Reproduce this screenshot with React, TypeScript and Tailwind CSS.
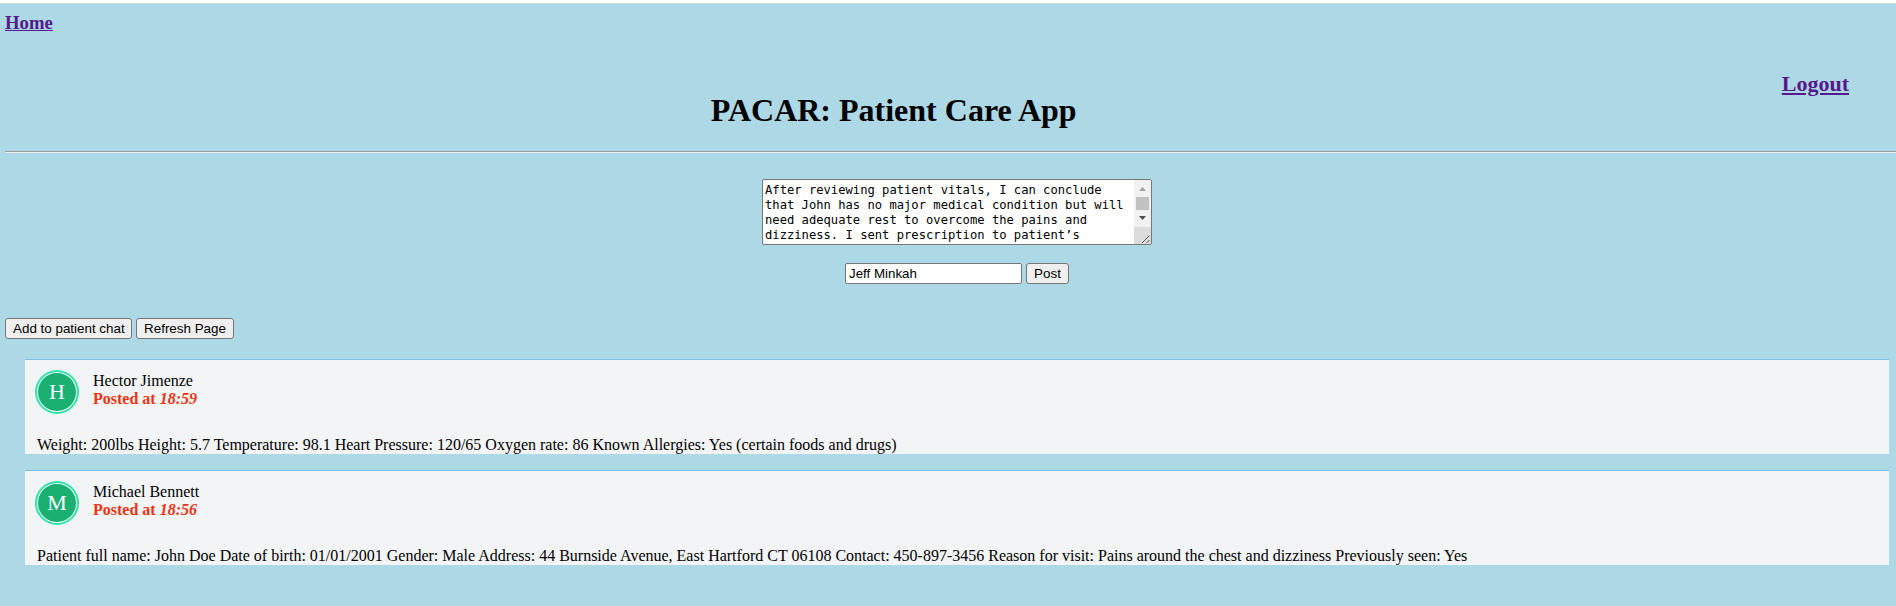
const posts = [
  { initial: 'H', name: 'Hector Jimenze', time: '18:59', body: 'Weight: 200lbs Height: 5.7 Temperature: 98.1 Heart Pressure: 120/65 Oxygen rate: 86 Known Allergies: Yes (certain foods and drugs)' },
  { initial: 'M', name: 'Michael Bennett', time: '18:56', body: 'Patient full name: John Doe Date of birth: 01/01/2001 Gender: Male Address: 44 Burnside Avenue, East Hartford CT 06108 Contact: 450-897-3456 Reason for visit: Pains around the chest and dizziness Previously seen: Yes' },
];

const button = 'h-[21px] rounded-[3px] border border-[#767676] bg-[#efefef] px-[7px] text-[13.4px] leading-[18px] whitespace-nowrap text-black';

function ScrollBar() {
  return (
    <div className="flex w-[17px] flex-col bg-[#f1f1f1]">
      <svg width="17" height="17"><path d="M5 11h7L8.500 7z" fill="#a3a3a3" /></svg>
      <div className="h-[13px] w-[13px] self-center bg-[#c1c1c1]" />
      <svg width="17" height="17"><path d="M5 6h7L8.500 10z" fill="#505050" /></svg>
      <svg className="bg-[#dcdcdc]" width="17" height="17"><path d="M8 16L15.500 8.500M12.500 16l3-3" stroke="#555" /></svg>
    </div>
  );
}

export default function App() {
  return (
    <div className="h-[606px] overflow-hidden border-t-[3px] border-white bg-[#add8e6] font-['Liberation_Serif',serif] text-[16px] leading-[18px] text-black">
      <header className="flex h-[148px] items-start border-t border-[#d3dde1] pl-[5px]">
        <a href="#" className="mt-[10px] text-[18.7px] font-bold text-[#551a8b] underline">Home</a>
        <h1 className="mt-[88px] ml-[658px] text-[32px] leading-[37px] font-bold">PACAR: Patient Care App</h1>
        <a href="#" className="mt-[66px] mr-[47px] ml-auto text-[22px] leading-[27px] font-bold text-[#551a8b] underline">Logout</a>
      </header>
      <hr className="ml-[5px] h-[2px] border-0 border-t border-[#9a9a9a] bg-[#eee]" />
      <main className="pl-[5px] font-['Liberation_Sans',sans-serif]">
        <form className="flex flex-col items-center pt-[26px] pl-[13px]">
          <div className="flex h-[66px] w-[390px] justify-between rounded-[2px] border border-[#767676] bg-white">
            <div className="overflow-hidden pt-[3px] pl-[2px] font-['DejaVu_Sans_Mono',monospace] text-[12.17px] leading-[15px] whitespace-pre">{'After reviewing patient vitals, I can conclude\nthat John has no major medical condition but will\nneed adequate rest to overcome the pains and\ndizziness. I sent prescription to patient’s'}</div>
            <ScrollBar />
          </div>
          <div className="mt-[18px] flex gap-[4px] text-[13.333px]">
            <div className="h-[21px] w-[177px] rounded-[2px] border border-[#767676] bg-white px-[3px] leading-[19px]">Jeff Minkah</div>
            <button type="button" className={`${button} w-[43px]`}>Post</button>
          </div>
        </form>
        <div className="mt-[34px] flex gap-[4px]">
          <button className={`${button} w-[127px]`}>Add to patient chat</button>
          <button className={`${button} w-[98px]`}>Refresh Page</button>
        </div>
        <section className="mt-[20px] mr-[7px] ml-[20px] flex flex-col gap-[16px] font-['Liberation_Serif',serif]">
          {posts.map((post) => (
            <article key={post.name} className="h-[95px] border-t border-[#7cc0f0] bg-[#f3f4f6]">
              <div className="flex h-[76px] gap-[14px] pt-[10px] pl-[10px]">
                <div className="size-[44px] rounded-full bg-[#2ee6a8] p-[2px]">
                  <div className="size-[40px] rounded-full bg-[#f3f4f6] p-px">
                    <div className="flex size-[38px] items-center justify-center rounded-full bg-[#19b072] text-[22px] text-white">{post.initial}</div>
                  </div>
                </div>
                <div className="pt-[2px]">
                  <div>{post.name}</div>
                  <div className="font-bold text-[#ee3311]">Posted at <i>{post.time}</i></div>
                </div>
              </div>
              <p className="pl-[12px]">{post.body}</p>
            </article>
          ))}
        </section>
      </main>
    </div>
  );
}
